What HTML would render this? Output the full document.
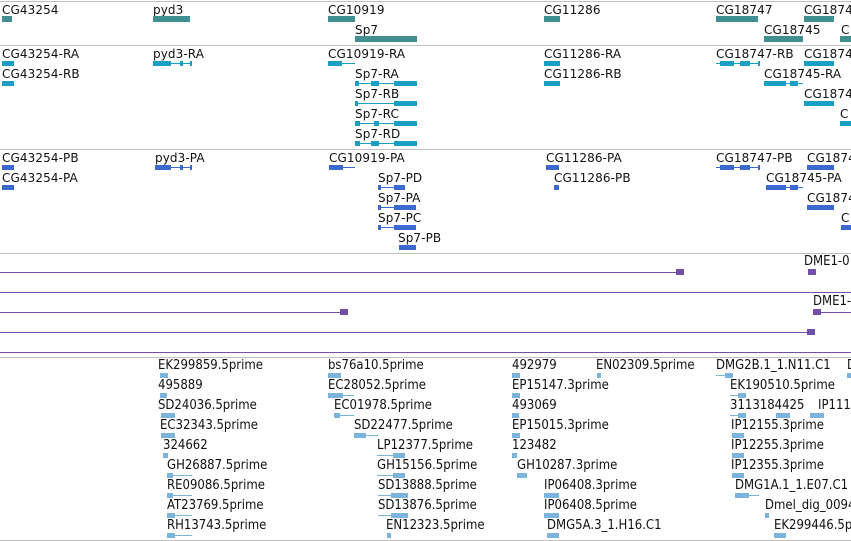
<!DOCTYPE html>
<html><head><meta charset="utf-8"><style>
body{margin:0;width:851px;height:541px;background:#fff;position:relative;overflow:hidden;font-family:"DejaVu Sans","Liberation Sans",sans-serif}
.t{position:absolute;font-size:12px;line-height:14px;white-space:nowrap;color:#111;letter-spacing:0.1px}
.c{position:absolute;font-family:"DejaVu Sans Condensed","DejaVu Sans",sans-serif;font-size:13px;line-height:14px;white-space:nowrap;color:#111}
.h{position:absolute;left:0;width:851px;height:1px;background:#c0c0c0}
.b{position:absolute;height:6px}
.g{background:#428f91}
.l{position:absolute;height:1px}
.x{position:absolute;height:5px}
.cy{background:#1a9fc4}.bl{background:#3a69cf}.lb{background:#7ab4dc}
.p{position:absolute;left:0;height:1px;background:#7050a8}
.pg{position:absolute;width:8px;height:6px;background:#7050a8}
</style></head><body>
<div class="h" style="top:1px"></div>
<div class="h" style="top:45px"></div>
<div class="h" style="top:149px"></div>
<div class="h" style="top:253px"></div>
<div class="h" style="top:357px"></div>
<div class="h" style="top:540px"></div>

<div class="t" style="left:2px;top:3px">CG43254</div><div class="b g" style="left:2px;top:16px;width:10px"></div>
<div class="t" style="left:153px;top:3px">pyd3</div><div class="b g" style="left:153px;top:16px;width:37px"></div>
<div class="t" style="left:328px;top:3px">CG10919</div><div class="b g" style="left:328px;top:16px;width:27px"></div>
<div class="t" style="left:355px;top:23px">Sp7</div><div class="b g" style="left:355px;top:36px;width:62px"></div>
<div class="t" style="left:544px;top:3px">CG11286</div><div class="b g" style="left:544px;top:16px;width:16px"></div>
<div class="t" style="left:716px;top:3px">CG18747</div><div class="b g" style="left:716px;top:16px;width:42px"></div>
<div class="t" style="left:804px;top:3px">CG1874</div><div class="b g" style="left:804px;top:16px;width:30px"></div>
<div class="t" style="left:764px;top:23px">CG18745</div><div class="b g" style="left:764px;top:36px;width:39px"></div>
<div class="t" style="left:841px;top:23px">C</div><div class="b g" style="left:840px;top:36px;width:11px"></div>

<div class="t" style="left:2px;top:47px">CG43254-RA</div><div class="x cy" style="left:2px;top:61px;width:12px"></div>
<div class="t" style="left:2px;top:67px">CG43254-RB</div><div class="x cy" style="left:2px;top:81px;width:12px"></div>
<div class="t" style="left:153px;top:47px">pyd3-RA</div><div class="l cy" style="left:153px;top:63px;width:39px"></div><div class="x cy" style="left:153px;top:61px;width:18px"></div><div class="x cy" style="left:180px;top:61px;width:3px"></div><div class="x cy" style="left:190px;top:61px;width:2px"></div>
<div class="t" style="left:328px;top:47px">CG10919-RA</div><div class="l cy" style="left:328px;top:63px;width:27px"></div><div class="x cy" style="left:328px;top:61px;width:14px"></div>
<div class="t" style="left:355px;top:67px">Sp7-RA</div><div class="l cy" style="left:355px;top:83px;width:62px"></div><div class="x cy" style="left:355px;top:81px;width:4px"></div><div class="x cy" style="left:371px;top:81px;width:8px"></div><div class="x cy" style="left:394px;top:81px;width:23px"></div>
<div class="t" style="left:355px;top:87px">Sp7-RB</div><div class="l cy" style="left:355px;top:103px;width:62px"></div><div class="x cy" style="left:355px;top:101px;width:3px"></div><div class="x cy" style="left:394px;top:101px;width:23px"></div>
<div class="t" style="left:355px;top:107px">Sp7-RC</div><div class="l cy" style="left:355px;top:123px;width:62px"></div><div class="x cy" style="left:355px;top:121px;width:5px"></div><div class="x cy" style="left:374px;top:121px;width:5px"></div><div class="x cy" style="left:394px;top:121px;width:23px"></div>
<div class="t" style="left:355px;top:127px">Sp7-RD</div><div class="l cy" style="left:355px;top:143px;width:62px"></div><div class="x cy" style="left:355px;top:141px;width:5px"></div><div class="x cy" style="left:371px;top:141px;width:8px"></div><div class="x cy" style="left:394px;top:141px;width:23px"></div>
<div class="t" style="left:544px;top:47px">CG11286-RA</div><div class="x cy" style="left:544px;top:61px;width:16px"></div>
<div class="t" style="left:544px;top:67px">CG11286-RB</div><div class="x cy" style="left:544px;top:81px;width:16px"></div>
<div class="t" style="left:716px;top:47px">CG18747-RB</div><div class="l cy" style="left:716px;top:63px;width:44px"></div><div class="x cy" style="left:720px;top:61px;width:14px"></div><div class="x cy" style="left:740px;top:61px;width:10px"></div><div class="x cy" style="left:758px;top:61px;width:2px"></div>
<div class="t" style="left:804px;top:47px">CG1874</div><div class="x cy" style="left:804px;top:61px;width:30px"></div>
<div class="t" style="left:764px;top:67px">CG18745-RA</div><div class="l cy" style="left:764px;top:83px;width:39px"></div><div class="x cy" style="left:764px;top:81px;width:22px"></div><div class="x cy" style="left:790px;top:81px;width:8px"></div>
<div class="t" style="left:804px;top:87px">CG1874</div><div class="x cy" style="left:804px;top:101px;width:30px"></div>
<div class="t" style="left:840px;top:107px">C</div><div class="x cy" style="left:840px;top:121px;width:11px"></div>

<div class="t" style="left:2px;top:151px">CG43254-PB</div><div class="x bl" style="left:2px;top:165px;width:12px"></div>
<div class="t" style="left:2px;top:171px">CG43254-PA</div><div class="x bl" style="left:2px;top:185px;width:12px"></div>
<div class="t" style="left:155px;top:151px">pyd3-PA</div><div class="l bl" style="left:155px;top:167px;width:37px"></div><div class="x bl" style="left:155px;top:165px;width:16px"></div><div class="x bl" style="left:180px;top:165px;width:3px"></div><div class="x bl" style="left:190px;top:165px;width:2px"></div>
<div class="t" style="left:329px;top:151px">CG10919-PA</div><div class="l bl" style="left:329px;top:167px;width:26px"></div><div class="x bl" style="left:329px;top:165px;width:14px"></div>
<div class="t" style="left:378px;top:171px">Sp7-PD</div><div class="l bl" style="left:378px;top:187px;width:27px"></div><div class="x bl" style="left:378px;top:185px;width:3px"></div><div class="x bl" style="left:394px;top:185px;width:11px"></div>
<div class="t" style="left:378px;top:191px">Sp7-PA</div><div class="l bl" style="left:378px;top:207px;width:38px"></div><div class="x bl" style="left:378px;top:205px;width:3px"></div><div class="x bl" style="left:394px;top:205px;width:22px"></div>
<div class="t" style="left:378px;top:211px">Sp7-PC</div><div class="l bl" style="left:378px;top:227px;width:38px"></div><div class="x bl" style="left:378px;top:225px;width:3px"></div><div class="x bl" style="left:394px;top:225px;width:22px"></div>
<div class="t" style="left:398px;top:231px">Sp7-PB</div><div class="x bl" style="left:399px;top:245px;width:17px"></div>
<div class="t" style="left:546px;top:151px">CG11286-PA</div><div class="x bl" style="left:546px;top:165px;width:13px"></div>
<div class="t" style="left:554px;top:171px">CG11286-PB</div><div class="x bl" style="left:554px;top:185px;width:5px"></div>
<div class="t" style="left:716px;top:151px">CG18747-PB</div><div class="l bl" style="left:716px;top:167px;width:44px"></div><div class="x bl" style="left:720px;top:165px;width:14px"></div><div class="x bl" style="left:740px;top:165px;width:10px"></div><div class="x bl" style="left:758px;top:165px;width:2px"></div>
<div class="t" style="left:807px;top:151px">CG1874</div><div class="x bl" style="left:807px;top:165px;width:27px"></div>
<div class="t" style="left:766px;top:171px">CG18745-PA</div><div class="l bl" style="left:766px;top:187px;width:37px"></div><div class="x bl" style="left:766px;top:185px;width:20px"></div><div class="x bl" style="left:790px;top:185px;width:8px"></div>
<div class="t" style="left:807px;top:191px">CG1874</div><div class="x bl" style="left:807px;top:205px;width:27px"></div>
<div class="t" style="left:841px;top:211px">C</div><div class="x bl" style="left:841px;top:225px;width:10px"></div>

<div class="p" style="top:272px;width:680px"></div><div class="pg" style="left:676px;top:269px"></div>
<div class="c" style="left:804px;top:255px">DME1-0</div><div class="pg" style="left:808px;top:269px"></div>
<div class="p" style="top:292px;width:851px"></div>
<div class="p" style="top:312px;width:345px"></div><div class="pg" style="left:340px;top:309px"></div>
<div class="c" style="left:813px;top:295px">DME1-</div><div class="pg" style="left:813px;top:309px"></div><div class="p" style="left:818px;top:312px;width:33px"></div>
<div class="p" style="top:332px;width:812px"></div><div class="pg" style="left:807px;top:329px"></div>
<div class="p" style="top:352px;width:851px"></div>

<div class="c" style="left:158px;top:359px">EK299859.5prime</div><div class="x lb" style="left:160px;top:373px;width:8px"></div>
<div class="c" style="left:158px;top:379px">495889</div><div class="x lb" style="left:160px;top:393px;width:7px"></div>
<div class="c" style="left:158px;top:399px">SD24036.5prime</div><div class="x lb" style="left:161px;top:413px;width:14px"></div>
<div class="c" style="left:160px;top:419px">EC32343.5prime</div><div class="x lb" style="left:161px;top:433px;width:14px"></div>
<div class="c" style="left:163px;top:439px">324662</div><div class="x lb" style="left:163px;top:453px;width:5px"></div>
<div class="c" style="left:167px;top:459px">GH26887.5prime</div><div class="l lb" style="left:167px;top:475px;width:25px"></div><div class="x lb" style="left:167px;top:473px;width:6px"></div>
<div class="c" style="left:167px;top:479px">RE09086.5prime</div><div class="l lb" style="left:167px;top:495px;width:25px"></div><div class="x lb" style="left:167px;top:493px;width:6px"></div>
<div class="c" style="left:167px;top:499px">AT23769.5prime</div><div class="l lb" style="left:167px;top:515px;width:25px"></div><div class="x lb" style="left:167px;top:513px;width:8px"></div>
<div class="c" style="left:167px;top:519px">RH13743.5prime</div><div class="l lb" style="left:167px;top:535px;width:25px"></div><div class="x lb" style="left:167px;top:533px;width:8px"></div>

<div class="c" style="left:328px;top:359px">bs76a10.5prime</div><div class="x lb" style="left:328px;top:373px;width:13px"></div>
<div class="c" style="left:328px;top:379px">EC28052.5prime</div><div class="l lb" style="left:328px;top:395px;width:26px"></div><div class="x lb" style="left:328px;top:393px;width:15px"></div>
<div class="c" style="left:334px;top:399px">EC01978.5prime</div><div class="l lb" style="left:334px;top:415px;width:20px"></div><div class="x lb" style="left:334px;top:413px;width:6px"></div>
<div class="c" style="left:354px;top:419px">SD22477.5prime</div><div class="l lb" style="left:354px;top:435px;width:24px"></div><div class="x lb" style="left:354px;top:433px;width:12px"></div>
<div class="c" style="left:377px;top:439px">LP12377.5prime</div><div class="l lb" style="left:377px;top:455px;width:28px"></div><div class="x lb" style="left:393px;top:453px;width:12px"></div>
<div class="c" style="left:377px;top:459px">GH15156.5prime</div><div class="l lb" style="left:377px;top:475px;width:28px"></div><div class="x lb" style="left:393px;top:473px;width:12px"></div>
<div class="c" style="left:378px;top:479px">SD13888.5prime</div><div class="l lb" style="left:378px;top:495px;width:30px"></div><div class="x lb" style="left:391px;top:493px;width:17px"></div>
<div class="c" style="left:378px;top:499px">SD13876.5prime</div><div class="l lb" style="left:378px;top:515px;width:30px"></div><div class="x lb" style="left:391px;top:513px;width:17px"></div>
<div class="c" style="left:386px;top:519px">EN12323.5prime</div><div class="x lb" style="left:387px;top:533px;width:4px"></div>

<div class="c" style="left:512px;top:359px">492979</div><div class="x lb" style="left:512px;top:373px;width:8px"></div>
<div class="c" style="left:596px;top:359px">EN02309.5prime</div><div class="x lb" style="left:597px;top:373px;width:4px"></div>
<div class="c" style="left:512px;top:379px">EP15147.3prime</div><div class="x lb" style="left:512px;top:393px;width:8px"></div>
<div class="c" style="left:512px;top:399px">493069</div><div class="x lb" style="left:512px;top:413px;width:7px"></div>
<div class="c" style="left:512px;top:419px">EP15015.3prime</div><div class="x lb" style="left:512px;top:433px;width:8px"></div>
<div class="c" style="left:512px;top:439px">123482</div><div class="x lb" style="left:512px;top:453px;width:5px"></div>
<div class="c" style="left:517px;top:459px">GH10287.3prime</div><div class="x lb" style="left:517px;top:473px;width:10px"></div>
<div class="c" style="left:544px;top:479px">IP06408.3prime</div><div class="x lb" style="left:544px;top:493px;width:15px"></div>
<div class="c" style="left:544px;top:499px">IP06408.5prime</div><div class="x lb" style="left:544px;top:513px;width:15px"></div>
<div class="c" style="left:547px;top:519px">DMG5A.3_1.H16.C1</div><div class="x lb" style="left:547px;top:533px;width:12px"></div>

<div class="c" style="left:716px;top:359px">DMG2B.1_1.N11.C1</div><div class="l lb" style="left:716px;top:375px;width:17px"></div><div class="x lb" style="left:725px;top:373px;width:8px"></div>
<div class="c" style="left:847px;top:359px">D</div><div class="x lb" style="left:847px;top:373px;width:4px"></div>
<div class="c" style="left:730px;top:379px">EK190510.5prime</div><div class="l lb" style="left:730px;top:395px;width:16px"></div><div class="x lb" style="left:738px;top:393px;width:8px"></div>
<div class="c" style="left:730px;top:399px">3113184425</div><div class="c" style="left:818px;top:399px">IP111</div><div class="l lb" style="left:730px;top:415px;width:16px"></div><div class="x lb" style="left:738px;top:413px;width:8px"></div><div class="x lb" style="left:776px;top:413px;width:14px"></div><div class="x lb" style="left:810px;top:413px;width:14px"></div>
<div class="c" style="left:731px;top:419px">IP12155.3prime</div><div class="x lb" style="left:732px;top:433px;width:12px"></div>
<div class="c" style="left:731px;top:439px">IP12255.3prime</div><div class="x lb" style="left:732px;top:453px;width:12px"></div>
<div class="c" style="left:731px;top:459px">IP12355.3prime</div><div class="x lb" style="left:732px;top:473px;width:12px"></div>
<div class="c" style="left:735px;top:479px">DMG1A.1_1.E07.C1</div><div class="l lb" style="left:735px;top:495px;width:24px"></div><div class="x lb" style="left:735px;top:493px;width:14px"></div>
<div class="c" style="left:765px;top:499px">Dmel_dig_0094</div><div class="x lb" style="left:765px;top:513px;width:4px"></div>
<div class="c" style="left:774px;top:519px">EK299446.5prime</div><div class="x lb" style="left:774px;top:533px;width:12px"></div>
</body></html>
